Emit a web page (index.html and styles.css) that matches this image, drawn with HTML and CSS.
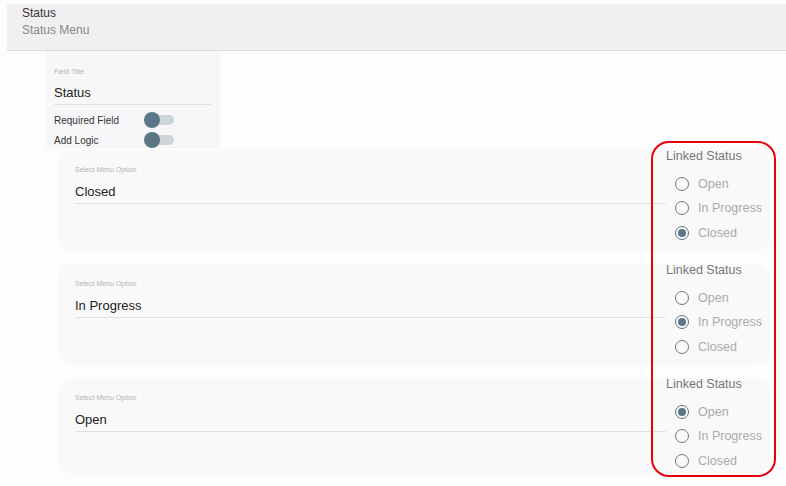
FILE: index.html
```html
<!DOCTYPE html>
<html lang="en">
  <head>
    <meta charset="UTF-8" />
    <meta name="viewport" content="width=device-width, initial-scale=1.0" />
    <title>Status Menu</title>

    <link rel="stylesheet" href="styles.css">
  </head>

  <body>
    <header class="top">
      <div class="top-title">Status</div>
      <div class="top-sub">Status Menu</div>
    </header>

    <section class="main">
      <div class="field">
        <div class="tiny">Field Title</div>
        <div class="value">Status</div>
        <div class="row first">
          <span class="row-label">Required Field</span>
          <span class="toggle"><span class="knob"></span></span>
        </div>
        <div class="row">
          <span class="row-label">Add Logic</span>
          <span class="toggle"><span class="knob"></span></span>
        </div>
      </div>

      <div class="cards">
        <div class="card">
          <div class="card-main">
            <div class="tiny">Select Menu Option</div>
            <div class="value">Closed</div>
          </div>
          <div class="linked">
            <div class="linked-title">Linked Status</div>
            <label class="radio"><span class="dot"></span>Open</label>
            <label class="radio"><span class="dot"></span>In Progress</label>
            <label class="radio"><span class="dot on"></span>Closed</label>
          </div>
        </div>

        <div class="card">
          <div class="card-main">
            <div class="tiny">Select Menu Option</div>
            <div class="value">In Progress</div>
          </div>
          <div class="linked">
            <div class="linked-title">Linked Status</div>
            <label class="radio"><span class="dot"></span>Open</label>
            <label class="radio"><span class="dot on"></span>In Progress</label>
            <label class="radio"><span class="dot"></span>Closed</label>
          </div>
        </div>

        <div class="card">
          <div class="card-main">
            <div class="tiny">Select Menu Option</div>
            <div class="value">Open</div>
          </div>
          <div class="linked">
            <div class="linked-title">Linked Status</div>
            <label class="radio"><span class="dot on"></span>Open</label>
            <label class="radio"><span class="dot"></span>In Progress</label>
            <label class="radio"><span class="dot"></span>Closed</label>
          </div>
        </div>
      </div>
    </section>

    <div class="highlight"></div>
  </body>
</html>
```

FILE: styles.css
```css
body {
  margin: 0;
  font-family: "Liberation Sans", Arial, sans-serif;
  background: #fdfdfd;
  color: #222;
}

.top {
  margin: 4px 0 0 7px;
  height: 47px;
  box-sizing: border-box;
  padding: 2px 0 0 15px;
  background: #f0f0f0;
  border-bottom: 1px solid #dcdcdc;
  font-size: 12px;
}

.top-title {
  color: #333;
  line-height: 14px;
}

.top-sub {
  margin-top: 3px;
  color: #888;
  line-height: 14px;
}

.field {
  margin-left: 46px;
  width: 174px;
  height: 97px;
  box-sizing: border-box;
  padding: 17px 8px 0;
  background: #f7f7f9;
}

.tiny {
  font-size: 7px;
  line-height: 8px;
  color: #b5b5b5;
}

.value {
  margin-top: 9px;
  padding-bottom: 3px;
  font-size: 13px;
  line-height: 16px;
  border-bottom: 1px solid #e2e2e2;
}

.row {
  display: flex;
  align-items: center;
  height: 20px;
  font-size: 10px;
  color: #333;
}

.row.first {
  margin-top: 5px;
}

.row-label {
  width: 90px;
}

.toggle {
  position: relative;
  width: 30px;
  height: 16px;
}

.toggle::before {
  content: "";
  position: absolute;
  left: 6px;
  top: 3px;
  width: 24px;
  height: 10px;
  border-radius: 5px;
  background: #cdd5da;
}

.knob {
  position: absolute;
  left: 0;
  top: 0;
  width: 16px;
  height: 16px;
  border-radius: 50%;
  background: #5b7785;
}

.cards {
  display: flex;
  flex-direction: column;
  gap: 12px;
  margin: 2px 0 0 58px;
  width: 712px;
}

.card {
  display: flex;
  height: 102px;
  border-radius: 14px;
  background: #f9f9f9;
}

.card:last-child {
  height: 96px;
}

.card-main {
  flex: 1;
  padding: 16px 0 0 17px;
}

.card-main .value {
  margin-top: 10px;
}

.linked {
  width: 104px;
}

.linked-title {
  font-size: 12.5px;
  line-height: 12px;
  color: #777;
}

.radio {
  display: flex;
  align-items: center;
  height: 24.5px;
  padding-left: 9px;
  font-size: 12.5px;
  color: #aaa;
}

.linked-title + .radio {
  margin-top: 9.5px;
}

.dot {
  flex: none;
  width: 12px;
  height: 12px;
  margin-right: 9px;
  border: 1.5px solid #777;
  border-radius: 50%;
  position: relative;
}

.dot.on {
  border-color: #5b7785;
}

.dot.on::after {
  content: "";
  position: absolute;
  left: 2px;
  top: 2px;
  width: 8px;
  height: 8px;
  border-radius: 50%;
  background: #5b7785;
}

.highlight {
  position: absolute;
  left: 651px;
  top: 141px;
  width: 125px;
  height: 336px;
  box-sizing: border-box;
  border: 2px solid #e8000b;
  border-radius: 18px;
}
```
